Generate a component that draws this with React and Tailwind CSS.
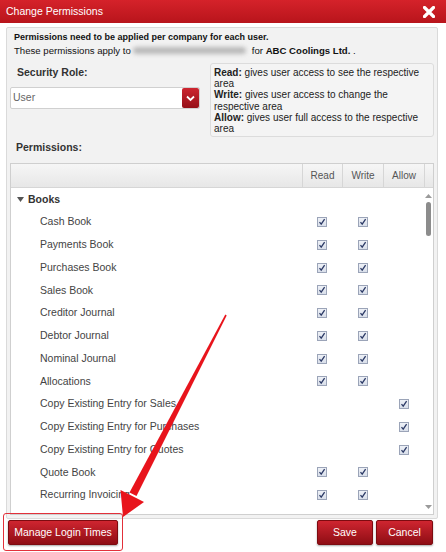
import React from 'react';

const rows = [
    { name: 'Cash Book', r: true, w: true },
    { name: 'Payments Book', r: true, w: true },
    { name: 'Purchases Book', r: true, w: true },
    { name: 'Sales Book', r: true, w: true },
    { name: 'Creditor Journal', r: true, w: true },
    { name: 'Debtor Journal', r: true, w: true },
    { name: 'Nominal Journal', r: true, w: true },
    { name: 'Allocations', r: true, w: true },
    { name: 'Copy Existing Entry for Sales', a: true },
    { name: 'Copy Existing Entry for Purchases', a: true },
    { name: 'Copy Existing Entry for Quotes', a: true },
    { name: 'Quote Book', r: true, w: true },
    { name: 'Recurring Invoicing', r: true, w: true },
];

const Check = () => (
    <span className="w-[10px] h-[10px] border border-[#9ba4b8] bg-gradient-to-b from-[#eef1f7] to-[#d9dfea] flex items-center justify-center">
        <svg width="8" height="8" viewBox="0 0 8 8">
            <path d="M1.5 4.2 L3.2 6.2 L6.6 1.2" fill="none" stroke="#2c3a66" strokeWidth="1.3" />
        </svg>
    </span>
);

const Cell = ({ on, w }) => (
    <div className={`${w} flex items-center justify-center`}>{on && <Check />}</div>
);

const RedButton = ({ children, className = '' }) => (
    <button className={`h-[25px] rounded-[2px] bg-gradient-to-b from-[#cf2530] to-[#8f0d14] text-white text-[10.5px] border border-[#7d0b10] shadow-[0_1px_2px_rgba(0,0,0,0.35)] ${className}`}>
        {children}
    </button>
);

export default function App() {
    return (
        <div className="relative w-[446px] h-[552px] overflow-hidden bg-white font-['Liberation_Sans',Arial,sans-serif] text-[#333]">
            {/* Title bar */}
            <div className="h-[23px] bg-gradient-to-b from-[#d5222a] to-[#b8141b] flex items-center justify-between pl-[6px] pr-[11px]">
                <span className="text-white text-[10.5px]">Change Permissions</span>
                <svg width="12" height="12" viewBox="0 0 12 12">
                    <path d="M1.5 1.5 L10.5 10.5 M10.5 1.5 L1.5 10.5" stroke="#fff" strokeWidth="3.2" strokeLinecap="round" />
                </svg>
            </div>

            {/* Panel */}
            <div className="mt-[4px] ml-[6px] w-[432px] border border-[#dadada] bg-[#f2f2f2] rounded-[2px] px-[3px] pt-[3px] pb-[3px]">
                <div className="pl-[4px] text-[#111] leading-[13px]">
                    <div className="text-[9px] font-bold">Permissions need to be applied per company for each user.</div>
                    <div className="text-[9.6px] flex items-center whitespace-nowrap">
                        <span>These permissions apply to&nbsp;</span>
                        <span className="inline-block w-[113px] h-[7px] bg-[#b9b9b9] blur-[2px] rounded-full" />
                        <span>&nbsp;&nbsp;for <b>ABC Coolings Ltd.</b> .</span>
                    </div>
                </div>

                <div className="mt-[6px] flex">
                    <div className="w-[190px]">
                        <div className="h-[20px] flex items-center pl-[7px] text-[10.5px] font-bold text-[#333]">Security Role:</div>
                        <div className="mt-[4px] h-[22px] flex items-stretch bg-white border border-[#d0d0d0] rounded-[2px]">
                            <span className="flex-1 flex items-center pl-[2px] text-[10.5px] text-[#666]">User</span>
                            <span className="w-[17px] rounded-[2px] bg-gradient-to-b from-[#cd2530] to-[#951018] flex items-center justify-center">
                                <svg width="9" height="7" viewBox="0 0 9 7">
                                    <path d="M1 1.5 L4.5 5 L8 1.5" fill="none" stroke="#fff" strokeWidth="1.8" />
                                </svg>
                            </span>
                        </div>
                    </div>
                    <div className="ml-[10px] w-[224px] h-[74px] border border-[#dcdcdc] rounded-[3px] bg-[#f4f4f4] pl-[3px] pr-[3px] pt-[3px] text-[10px] leading-[11.2px] text-[#222]">
                        <b>Read:</b> gives user access to see the respective area<br />
                        <b>Write:</b> gives user access to change the respective area<br />
                        <b>Allow:</b> gives user full access to the respective area
                    </div>
                </div>

                <div className="mt-[4px] h-[14px] flex items-center pl-[6px] text-[10.5px] font-bold text-[#333]">Permissions:</div>

                {/* Table */}
                <div className="mt-[8px] w-[424px] h-[352px] border border-[#cfcfcf] bg-white flex flex-col overflow-hidden">
                    <div className="h-[24px] flex bg-gradient-to-b from-[#f6f6f6] to-[#e7e7e7] border-b border-[#d6d6d6] text-[10px] text-[#555]">
                        <div className="w-[291px]" />
                        <div className="w-[40px] border-l border-[#d6d6d6] flex items-center justify-center">Read</div>
                        <div className="w-[41px] border-l border-[#d6d6d6] flex items-center justify-center">Write</div>
                        <div className="w-[41px] border-l border-[#d6d6d6] flex items-center justify-center">Allow</div>
                        <div className="flex-1 border-l border-[#d6d6d6]" />
                    </div>
                    <div className="flex-1 flex overflow-hidden">
                        <div className="w-[413px]">
                            <div className="h-[22.75px] flex items-center pl-[6px] gap-[4px] text-[10.5px] font-bold text-[#333]">
                                <svg width="7" height="5" viewBox="0 0 7 5">
                                    <path d="M0 0 L7 0 L3.5 5 Z" fill="#555" />
                                </svg>
                                Books
                            </div>
                            {rows.map(row => (
                                <div key={row.name} className="h-[22.75px] flex items-center text-[10.5px] text-[#444]">
                                    <div className="w-[291px] pl-[29px]">{row.name}</div>
                                    <Cell on={row.r} w="w-[40px]" />
                                    <Cell on={row.w} w="w-[41px]" />
                                    <Cell on={row.a} w="w-[41px]" />
                                </div>
                            ))}
                        </div>
                        {/* Scrollbar */}
                        <div className="flex-1 flex flex-col items-center pt-[6px] pb-[5px]">
                            <svg width="7" height="4" viewBox="0 0 7 4">
                                <path d="M0 4 L3.5 0 L7 4 Z" fill="#9a9a9a" />
                            </svg>
                            <div className="mt-[4px] w-[5px] h-[34px] rounded-full bg-[#8c8c8c]" />
                            <div className="flex-1" />
                            <svg width="7" height="4" viewBox="0 0 7 4">
                                <path d="M0 0 L7 0 L3.5 4 Z" fill="#9a9a9a" />
                            </svg>
                        </div>
                    </div>
                </div>
            </div>

            {/* Buttons */}
            <div className="mt-[1px] pl-[8px] pr-[13px] flex items-center">
                <RedButton className="w-[110px]">Manage Login Times</RedButton>
                <div className="flex-1" />
                <RedButton className="w-[56px]">Save</RedButton>
                <RedButton className="ml-[3px] w-[57px]">Cancel</RedButton>
            </div>

            {/* Annotation */}
            <div className="absolute left-[3px] top-[513px] w-[120px] h-[38px] border-[1.5px] border-[#e2303a] rounded-[3px] pointer-events-none" />
            <svg className="absolute left-0 top-0 pointer-events-none" width="446" height="552" viewBox="0 0 446 552">
                <polygon points="225.3,314.6 226.7,315.4 136.5,496 129.5,492.5" fill="#e8141c" />
                <polygon points="123,517 120.5,490 144,502" fill="#e8141c" />
            </svg>
        </div>
    );
}
